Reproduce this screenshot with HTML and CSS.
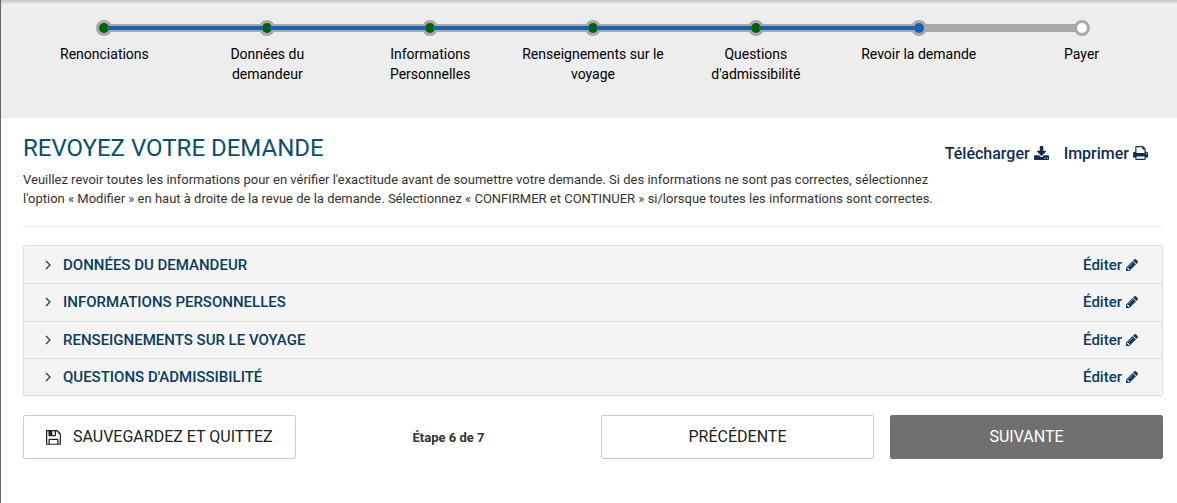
FILE: index.html
```html
<!DOCTYPE html>
<html lang="fr">
<head>
<meta charset="utf-8">
<title>Revoyez votre demande</title>
<meta name="viewport" content="width=device-width, initial-scale=1">
<link rel="stylesheet" href="styles.css">
</head>
<body>
<svg class="sprite" aria-hidden="true">
  <symbol id="pencil" viewBox="128 149 1515 1515"><path d="M491 1536l91-91-235-235-91 91v107h128v128h107zm523-928q0-22-22-22-10 0-17 7l-542 542q-7 7-7 17 0 22 22 22 10 0 17-7l542-542q7-7 7-17zm-54-192l416 416-832 832h-416v-416zm683 96q0 53-37 90l-166 166-416-416 166-165q36-38 90-38 53 0 91 38l235 234q37 39 37 91z"/></symbol>
  <symbol id="download" viewBox="64 0 1664 1536"><path d="M1344 1344q0-26-19-45t-45-19-45 19-19 45 19 45 45 19 45-19 19-45zm256 0q0-26-19-45t-45-19-45 19-19 45 19 45 45 19 45-19 19-45zm128-224v320q0 40-28 68t-68 28h-1472q-40 0-68-28t-28-68v-320q0-40 28-68t68-28h465l135 136q58 56 136 56t136-56l136-136h464q40 0 68 28t28 68zm-325-569q17 41-14 70l-448 448q-18 19-45 19t-45-19l-448-448q-31-29-14-70 17-39 59-39h256v-448q0-26 19-45t45-19h256q26 0 45 19t19 45v448h256q42 0 59 39z"/></symbol>
  <symbol id="print" viewBox="64 128 1664 1536"><path d="M448 1536h896v-256h-896v256zm0-640h896v-384h-160q-40 0-68-28t-28-68v-160h-640v640zm1152 64q0-26-19-45t-45-19-45 19-19 45 19 45 45 19 45-19 19-45zm128 0v416q0 13-9.5 22.5t-22.5 9.5h-224v160q0 40-28 68t-68 28h-960q-40 0-68-28t-28-68v-160h-224q-13 0-22.5-9.5t-9.5-22.5v-416q0-79 56.5-135.5t135.5-56.5h64v-544q0-40 28-68t68-28h672q40 0 88 20t76 48l152 152q28 28 48 76t20 88v256h64q79 0 135.5 56.5t56.5 135.5z"/></symbol>
  <symbol id="floppy" viewBox="128 128 1536 1536"><path d="M512 1536h768v-384h-768v384zm896 0h128v-896q0-14-10-38.500t-20-34.500l-281-281q-10-10-34-20t-39-10v416q0 40-28 68t-68 28h-576q-40 0-68-28t-28-68v-416h-128v1280h128v-416q0-40 28-68t68-28h832q40 0 68 28t28 68v416zm-384-928v-320q0-13-9.500-22.500t-22.500-9.500h-192q-13 0-22.500 9.500t-9.500 22.500v320q0 13 9.500 22.500t22.500 9.500h192q13 0 22.500-9.500t9.500-22.500zm640 32v896q0 40-28 68t-68 28h-1344q-40 0-68-28t-28-68v-1344q0-40 28-68t68-28h928q40 0 88 20t76 48l280 280q28 28 48 76t20 88z"/></symbol>
  <symbol id="angle" viewBox="0 0 6 10"><path d="M1 1l4 4-4 4" fill="none" stroke="currentColor" stroke-width="1.200"/></symbol>
</svg>
<nav class="progress" aria-label="Étapes">
  <ol class="steps">
    <li class="step done"><span class="dot"></span>Renonciations</li>
    <li class="step done"><span class="dot"></span>Données du demandeur</li>
    <li class="step done"><span class="dot"></span>Informations Personnelles</li>
    <li class="step done"><span class="dot"></span>Renseignements sur le voyage</li>
    <li class="step done"><span class="dot"></span>Questions d'admissibilité</li>
    <li class="step current" aria-current="step"><span class="dot"></span>Revoir la demande</li>
    <li class="step"><span class="dot"></span>Payer</li>
  </ol>
</nav>
<main class="content">
  <header class="intro">
    <div class="intro-text">
      <h1>REVOYEZ VOTRE DEMANDE</h1>
      <p>Veuillez revoir toutes les informations pour en vérifier l'exactitude avant de soumettre votre demande. Si des informations ne sont pas correctes, sélectionnez l'option « Modifier » en haut à droite de la revue de la demande. Sélectionnez « CONFIRMER et CONTINUER » si/lorsque toutes les informations sont correctes.</p>
    </div>
    <div class="tools">
      <a href="#">Télécharger <svg class="icon-tool"><use href="#download"/></svg></a>
      <a href="#">Imprimer <svg class="icon-tool"><use href="#print"/></svg></a>
    </div>
  </header>
  <div class="sections">
    <section class="section">
      <h2><button type="button" class="toggle"><svg class="icon-angle"><use href="#angle"/></svg>DONNÉES DU DEMANDEUR</button></h2>
      <a href="#">Éditer <svg class="icon-edit"><use href="#pencil"/></svg></a>
    </section>
    <section class="section">
      <h2><button type="button" class="toggle"><svg class="icon-angle"><use href="#angle"/></svg>INFORMATIONS PERSONNELLES</button></h2>
      <a href="#">Éditer <svg class="icon-edit"><use href="#pencil"/></svg></a>
    </section>
    <section class="section">
      <h2><button type="button" class="toggle"><svg class="icon-angle"><use href="#angle"/></svg>RENSEIGNEMENTS SUR LE VOYAGE</button></h2>
      <a href="#">Éditer <svg class="icon-edit"><use href="#pencil"/></svg></a>
    </section>
    <section class="section">
      <h2><button type="button" class="toggle"><svg class="icon-angle"><use href="#angle"/></svg>QUESTIONS D'ADMISSIBILITÉ</button></h2>
      <a href="#">Éditer <svg class="icon-edit"><use href="#pencil"/></svg></a>
    </section>
  </div>
  <footer class="actions">
    <button type="button" class="btn btn-save"><svg class="icon-save"><use href="#floppy"/></svg>SAUVEGARDEZ ET QUITTEZ</button>
    <p class="count">Étape 6 de 7</p>
    <button type="button" class="btn">PRÉCÉDENTE</button>
    <button type="button" class="btn btn-next">SUIVANTE</button>
  </footer>
</main>
</body>
</html>
```
FILE: styles.css
```css
* { box-sizing: border-box; }

body {
  margin: 0;
  min-height: 100vh;
  border-left: 1px solid #666;
  background: #fff;
  color: #333;
  font-family: Roboto, "Liberation Sans", sans-serif;
}

h1, h2, p, ol { margin: 0; padding: 0; }
a { text-decoration: none; }
svg { fill: currentColor; flex: none; }
.sprite { position: absolute; width: 0; height: 0; }

/* Progress steps */
.progress {
  padding: 20px 14px 34px 22px;
  background: linear-gradient(#c4c4c4, #ededed 4px);
}
.steps {
  display: grid;
  grid-template-columns: repeat(7, 1fr);
  list-style: none;
  isolation: isolate;
}
.step {
  position: relative;
  padding: 0 10px;
  color: #000;
  font-size: 14px;
  line-height: 20px;
  text-align: center;
}
.dot {
  display: block;
  width: 16px;
  height: 16px;
  margin: 0 auto 8px;
  border: 3px solid #a9a9a9;
  border-radius: 50%;
  background: #fff;
}
.done .dot { background: #006400; }
.current .dot { background: #1b61ad; }
.step:not(:last-child)::before {
  content: "";
  position: absolute;
  z-index: -1;
  top: 4px;
  left: 50%;
  width: 100%;
  height: 8px;
  background: #a9a9a9;
}
.done::after {
  content: "";
  position: absolute;
  z-index: 1;
  top: 6px;
  left: calc(50% + 3px);
  width: calc(100% - 7px);
  height: 4px;
  background: #1b61ad;
}

/* Page heading */
.content { padding: 16px 14px 40px 22px; }
.intro {
  display: flex;
  justify-content: space-between;
  padding-bottom: 18px;
  border-bottom: 1px solid #eee;
}
.intro-text { max-width: 912px; }
h1 {
  margin-bottom: 7px;
  color: #0b4e71;
  font-size: 24px;
  font-weight: 400;
  line-height: 29px;
}
.intro p { font-size: 13px; line-height: 19px; }
.tools {
  display: flex;
  gap: 15px;
  padding: 9px 15px 0 0;
}
.tools a {
  display: flex;
  align-items: center;
  gap: 4px;
  height: 20px;
  color: #112e51;
  font-size: 16px;
  font-weight: 500;
  white-space: nowrap;
}
.icon-tool { width: 15px; height: 14px; }

/* Collapsible sections */
.sections {
  display: grid;
  grid-auto-rows: 1fr;
  min-height: 151px;
  margin-top: 18px;
  border: 1px solid #ddd;
  border-radius: 2px;
  background: #f4f4f4;
  box-shadow: 0 1px 1px rgba(0, 0, 0, .05);
}
.section {
  display: flex;
  align-items: center;
  justify-content: space-between;
  padding: 0 24px 0 21px;
}
.section + .section { border-top: 1px solid #ddd; }
.toggle {
  display: flex;
  align-items: center;
  gap: 12px;
  padding: 0;
  border: 0;
  background: none;
  color: #0c3c60;
  font: 500 15px/20px Roboto, "Liberation Sans", sans-serif;
}
.icon-angle { width: 6px; height: 10px; }
.section a {
  display: flex;
  align-items: center;
  gap: 4px;
  color: #0c3c60;
  font-size: 15px;
  font-weight: 500;
  line-height: 20px;
}
.icon-edit { width: 12px; height: 12px; }

/* Footer buttons */
.actions {
  display: grid;
  grid-template-columns: repeat(4, 1fr);
  gap: 16px;
  align-items: center;
  margin-top: 19px;
}
.btn {
  display: flex;
  align-items: center;
  justify-content: center;
  padding: 11px 22px;
  border: 1px solid #ccc;
  border-radius: 2px;
  background: #fff;
  color: #212121;
  font: 400 16px/20px Roboto, "Liberation Sans", sans-serif;
}
.btn-save { justify-content: flex-start; gap: 12px; }
.btn-next { border-color: #707070; background: #707070; color: #fff; }
.icon-save { width: 15px; height: 15px; }
.count { font-size: 13px; font-weight: 700; text-align: center; }
```
